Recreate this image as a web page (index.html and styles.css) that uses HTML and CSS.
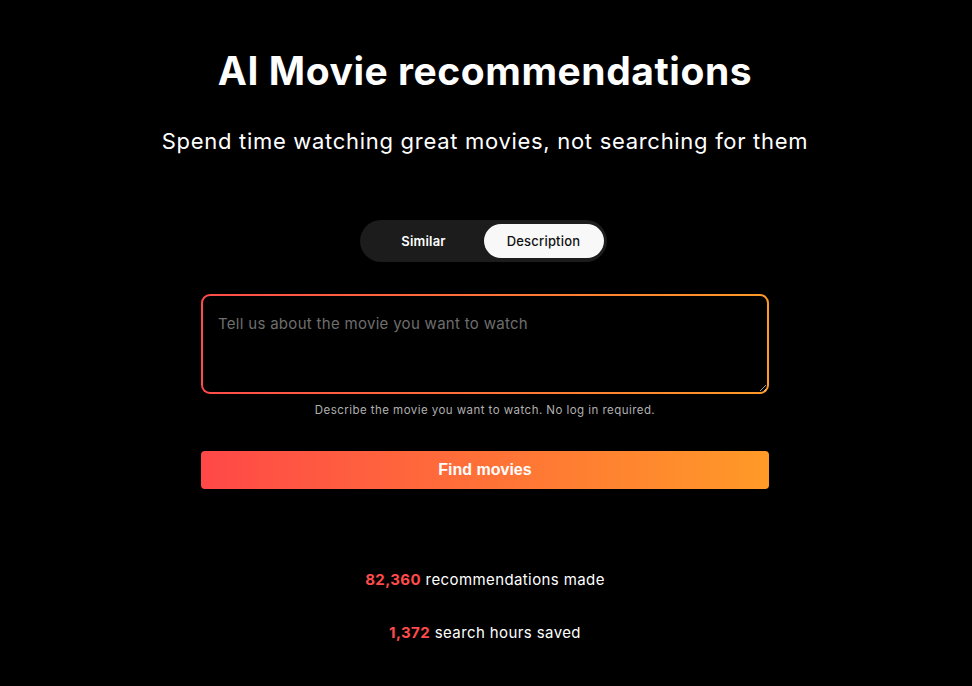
FILE: index.html
```html
<!DOCTYPE html>
<html lang="en">
<head>
<meta charset="utf-8">
<title>AI Movie recommendations</title>
<link rel="stylesheet" href="styles.css">
</head>
<body>
<main class="page">
  <h1 class="title">AI Movie recommendations</h1>
  <p class="subtitle">Spend time watching great movies, not searching for them</p>
  <div class="toggle">
    <button class="tab">Similar</button>
    <button class="tab active">Description</button>
  </div>
  <form class="form">
    <textarea class="input" placeholder="Tell us about the movie you want to watch"></textarea>
    <p class="hint">Describe the movie you want to watch. No log in required.</p>
    <button type="button" class="submit">Find movies</button>
  </form>
  <p class="stat stat-first"><span class="num">82,360</span> recommendations made</p>
  <p class="stat"><span class="num">1,372</span> search hours saved</p>
</main>
</body>
</html>
```

FILE: styles.css
```css
html, body {
  margin: 0;
  padding: 0;
  background: #000;
}
body {
  font-family: Inter, "Noto Sans", sans-serif;
  color: #fff;
}
.page {
  display: flex;
  flex-direction: column;
  align-items: center;
  padding-top: 47px;
  padding-right: 2px;
}
.title {
  margin: 0;
  font-size: 39px;
  font-weight: 700;
  letter-spacing: 0.55px;
  line-height: 48px;
}
.subtitle {
  margin: 32px 0 0;
  font-size: 22px;
  font-weight: 400;
  line-height: 28px;
  letter-spacing: 0.7px;
}
.toggle {
  margin-top: 65px;
  display: flex;
  background: #1c1c1c;
  border-radius: 21px;
  padding: 4px 3px 4px 4px;
  width: 240px;
  height: 34px;
  margin-left: -4px;
}
.tab {
  flex: 1;
  border: none;
  background: transparent;
  color: #fff;
  font-family: inherit;
  font-size: 13px;
  font-weight: 600;
  letter-spacing: 0.2px;
  border-radius: 17px;
  padding: 0;
}
.tab.active {
  background: #f8f8f8;
  color: #111;
  font-weight: 500;
}
.form {
  margin-top: 32px;
  width: 568px;
  display: flex;
  flex-direction: column;
  align-items: center;
}
.input {
  box-sizing: border-box;
  width: 568px;
  height: 100px;
  border: 2px solid transparent;
  border-radius: 9px;
  background: linear-gradient(#000, #000) padding-box,
              linear-gradient(90deg, #ff4b4b, #ff9a27) border-box;
  color: #fff;
  font-family: inherit;
  font-size: 15px;
  letter-spacing: 0.3px;
  padding: 18px 15px;
  outline: none;
}
.input::placeholder {
  color: #6e6e6e;
}
.hint {
  margin: 8px 0 0;
  font-size: 11.5px;
  letter-spacing: 0.45px;
  color: #b0b0b0;
  line-height: 16px;
}
.submit {
  margin-top: 33px;
  width: 568px;
  height: 38px;
  border: none;
  border-radius: 4px;
  background: linear-gradient(90deg, #ff4848, #ff9a27);
  color: #fff;
  font-family: "Liberation Sans", Arial, sans-serif;
  font-size: 16px;
  font-weight: 700;
}
.stat {
  margin: 0;
  font-size: 15px;
  line-height: 20px;
  letter-spacing: 0.4px;
}
.stat-first {
  margin-top: 81px;
}
.stat + .stat {
  margin-top: 33px;
}
.num {
  color: #ff4b4b;
  font-weight: 700;
}
```
